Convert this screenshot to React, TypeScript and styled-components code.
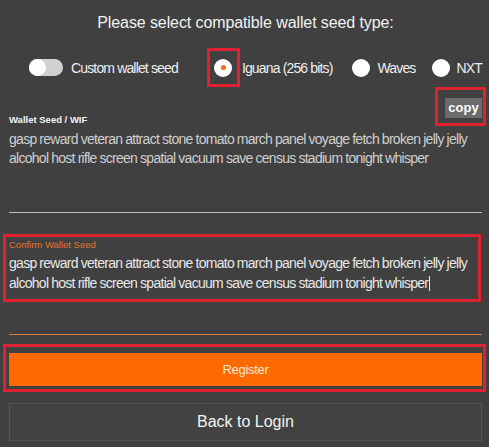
import React from "react";
import styled, { createGlobalStyle } from "styled-components";

const GlobalStyle = createGlobalStyle`
  html, body {
    margin: 0;
    padding: 0;
    background: #404040;
    font-family: "Liberation Sans", Arial, sans-serif;
  }
`;

const Page = styled.div`
  width: 489px;
  height: 447px;
  box-sizing: border-box;
  padding: 13px 7px 0 9px;
  background: #404040;
  color: #fff;
  overflow: hidden;
`;

const Title = styled.h2`
  margin: 0;
  font-size: 16px;
  font-weight: 400;
  text-align: center;
  line-height: 20px;
  color: #f2f2f2;
  letter-spacing: -0.1px;
`;

const Options = styled.div`
  display: flex;
  align-items: center;
  margin-top: 15px;
  padding-left: 20px;
  height: 39px;
  white-space: nowrap;
`;

const Toggle = styled.span`
  position: relative;
  display: inline-block;
  flex: none;
  width: 34px;
  height: 17px;
  border-radius: 9px;
  background: #d0d0d0;
  &::after {
    content: "";
    position: absolute;
    left: 0;
    top: 0;
    width: 17px;
    height: 17px;
    border-radius: 50%;
    background: #fff;
  }
`;

const OptionLabel = styled.span<{ $gap?: number }>`
  font-size: 14px;
  letter-spacing: -0.85px;
  color: #eee;
  margin-left: ${(p) => p.$gap ?? 8}px;
`;

const Radio = styled.span<{ $checked?: boolean }>`
  display: inline-flex;
  flex: none;
  align-items: center;
  justify-content: center;
  width: 18px;
  height: 18px;
  border-radius: 50%;
  background: #fff;
  &::after {
    content: "";
    display: ${(p) => (p.$checked ? "block" : "none")};
    width: 5px;
    height: 5px;
    border-radius: 50%;
    background: #f26b1d;
  }
`;

const RadioMark = styled.span`
  display: inline-flex;
  flex: none;
  align-items: center;
  justify-content: center;
  box-sizing: border-box;
  width: 33px;
  height: 39px;
  border: 3px solid #df2230;
  margin-left: 29px;
`;

const Gap = styled.span<{ $w: number }>`
  display: inline-block;
  flex: none;
  width: ${(p) => p.$w}px;
`;

const Field = styled.div`
  position: relative;
  margin-top: 27px;
`;

const Label = styled.div<{ $accent?: boolean }>`
  font-size: 9.5px;
  font-weight: ${(p) => (p.$accent ? 400 : 700)};
  color: ${(p) => (p.$accent ? "#e0762e" : "#f4f4f4")};
  line-height: 12px;
`;

const SeedText = styled.div`
  font-size: 14px;
  letter-spacing: -0.72px;
  word-spacing: -0.3px;
  line-height: 19px;
  color: #cfcfcf;
  margin-top: 4px;
  padding-right: 8px;
`;

const Underline = styled.div<{ $accent?: boolean; $top: number }>`
  margin-top: ${(p) => p.$top}px;
  height: 1px;
  background: ${(p) => (p.$accent ? "#e07b39" : "#bdbdbd")};
`;

const CopyMark = styled.div`
  position: absolute;
  right: -4px;
  top: -27px;
  box-sizing: border-box;
  width: 51px;
  height: 39px;
  border: 3px solid #df2230;
  display: flex;
  align-items: center;
  justify-content: center;
`;

const CopyButton = styled.button`
  width: 37px;
  height: 20px;
  padding: 0;
  border: none;
  background: #6b6b6b;
  color: #fff;
  font-family: inherit;
  font-size: 13px;
  font-weight: 700;
  margin-left: 6px;
  margin-top: 2px;
`;

const ConfirmMark = styled.div`
  box-sizing: border-box;
  margin: 21px 0 0 -6px;
  width: 478px;
  height: 68px;
  border: 3px solid #df2230;
  padding: 2px 0 0 3px;
`;

const ConfirmText = styled(SeedText)`
  color: #e8e8e8;
  line-height: 20px;
  margin-top: 2px;
  padding-right: 0;
`;

const Caret = styled.span`
  display: inline-block;
  width: 1px;
  height: 15px;
  background: #eee;
  vertical-align: -3px;
  margin-left: 1px;
`;

const RegisterMark = styled.div`
  box-sizing: border-box;
  margin: 9px 0 0 -6px;
  width: 483px;
  height: 48px;
  border: 3px solid #df2230;
  padding: 6px 1px 0 3px;
`;

const RegisterButton = styled.button`
  display: block;
  width: 100%;
  height: 33px;
  border: none;
  background: #ff6a00;
  color: #fde9d8;
  font-family: inherit;
  font-size: 13px;
  letter-spacing: -0.3px;
`;

const BackButton = styled.button`
  display: block;
  margin-top: 11px;
  width: 473px;
  height: 38px;
  border: 1px solid #555;
  background: #424242;
  color: #f4f4f4;
  font-family: inherit;
  font-size: 16px;
`;

const seed =
  "gasp reward veteran attract stone tomato march panel voyage fetch broken jelly jelly alcohol host rifle screen spatial vacuum save census stadium tonight whisper";

export default function App() {
  return (
    <Page>
      <GlobalStyle />
      <Title>Please select compatible wallet seed type:</Title>
      <Options>
        <Toggle />
        <OptionLabel>Custom wallet seed</OptionLabel>
        <RadioMark>
          <Radio $checked />
        </RadioMark>
        <OptionLabel $gap={2}>Iguana (256 bits)</OptionLabel>
        <Gap $w={19} />
        <Radio />
        <OptionLabel $gap={8}>Waves</OptionLabel>
        <Gap $w={16} />
        <Radio />
        <OptionLabel $gap={7}>NXT</OptionLabel>
      </Options>

      <Field>
        <CopyMark>
          <CopyButton>copy</CopyButton>
        </CopyMark>
        <Label>Wallet Seed / WIF</Label>
        <SeedText>{seed}</SeedText>
        <Underline $top={44} />
      </Field>

      <ConfirmMark>
        <Label $accent>Confirm Wallet Seed</Label>
        <ConfirmText>
          {seed}
          <Caret />
        </ConfirmText>
      </ConfirmMark>
      <Underline $accent $top={32} />

      <RegisterMark>
        <RegisterButton>Register</RegisterButton>
      </RegisterMark>

      <BackButton>Back to Login</BackButton>
    </Page>
  );
}
